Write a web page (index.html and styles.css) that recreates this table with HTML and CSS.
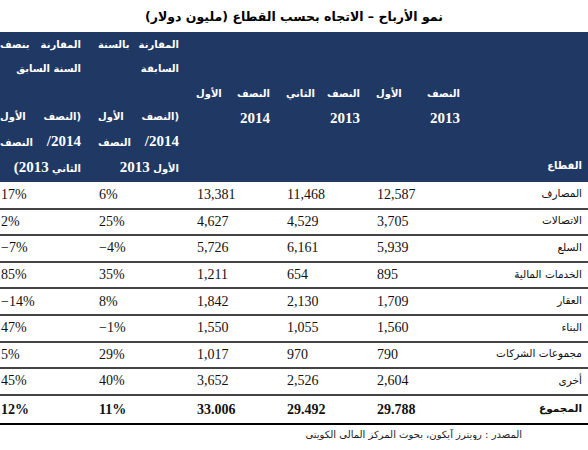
FILE: index.html
```html
<!DOCTYPE html>
<html lang="ar" dir="rtl">
  <head>
    <meta charset="UTF-8" />
    <meta name="viewport" content="width=device-width, initial-scale=1.0" />
    <title>نمو الأرباح</title>
    <link rel="stylesheet" href="styles.css">
  </head>
  <body>
    <div class="report">
      <h1 class="title">نمو الأرباح – الاتجاه بحسب القطاع (مليون دولار)</h1>

      <table class="profits">
        <thead>
          <tr>
            <th class="col-sector">القطاع</th>
            <th class="col-half first">
              <div class="just">النصف الأول</div>
              <div><span class="num">2013</span></div>
            </th>
            <th class="col-half">
              <div class="just">النصف الثاني</div>
              <div><span class="num">2013</span></div>
            </th>
            <th class="col-half">
              <div class="just">النصف الأول</div>
              <div><span class="num">2014</span></div>
            </th>
            <th class="col-cmp">
              <div class="just">المقارنة بالسنة</div>
              <div>السابقة</div>
              <div class="blank"></div>
              <div class="just">(النصف الأول</div>
              <div class="just"><span class="num">2014/</span> النصف</div>
              <div>الأول <span class="num">2013</span></div>
            </th>
            <th class="col-cmp">
              <div class="just">المقارنة بنصف</div>
              <div>السنة السابق</div>
              <div class="blank"></div>
              <div class="just">(النصف الأول</div>
              <div class="just"><span class="num">2014/</span> النصف</div>
              <div>الثاني <span class="num">2013)</span></div>
            </th>
          </tr>
        </thead>
        <tbody>
          <tr><td class="sector">المصارف</td><td>12,587</td><td>11,468</td><td>13,381</td><td>6%</td><td>17%</td></tr>
          <tr><td class="sector">الاتصالات</td><td>3,705</td><td>4,529</td><td>4,627</td><td>25%</td><td>2%</td></tr>
          <tr><td class="sector">السلع</td><td>5,939</td><td>6,161</td><td>5,726</td><td>−4%</td><td>−7%</td></tr>
          <tr><td class="sector">الخدمات المالية</td><td>895</td><td>654</td><td>1,211</td><td>35%</td><td>85%</td></tr>
          <tr><td class="sector">العقار</td><td>1,709</td><td>2,130</td><td>1,842</td><td>8%</td><td>−14%</td></tr>
          <tr><td class="sector">البناء</td><td>1,560</td><td>1,055</td><td>1,550</td><td>−1%</td><td>47%</td></tr>
          <tr><td class="sector">مجموعات الشركات</td><td>790</td><td>970</td><td>1,017</td><td>29%</td><td>5%</td></tr>
          <tr><td class="sector">أخرى</td><td>2,604</td><td>2,526</td><td>3,652</td><td>40%</td><td>45%</td></tr>
          <tr class="total"><td class="sector">المجموع</td><td>29.788</td><td>29.492</td><td>33.006</td><td>11%</td><td>12%</td></tr>
        </tbody>
      </table>

      <p class="source">المصدر : رويترز آيكون، بحوث المركز المالي الكويتي</p>
    </div>
  </body>
</html>
```

FILE: styles.css
```css
* {
  margin: 0;
  padding: 0;
  box-sizing: border-box;
}

body {
  font-family: 'Liberation Serif', 'DejaVu Sans', serif;
  background: #fff;
  color: #111;
}

.report {
  width: 588px;
}

.title {
  font-family: 'DejaVu Sans', sans-serif;
  font-size: 12.5px;
  font-weight: bold;
  text-align: center;
  height: 32px;
  line-height: 34px;
  color: #000;
}

.profits {
  width: 588px;
  border-collapse: collapse;
  table-layout: fixed;
}

.profits th {
  background-color: #1f3864;
  color: #fff;
  font-family: 'DejaVu Sans', sans-serif;
  font-size: 10px;
  font-weight: bold;
  line-height: 24px;
  height: 150px;
  padding: 0 13px 0 3px;
  text-align: right;
  vertical-align: middle;
}

.profits th.col-sector {
  width: 125px;
  vertical-align: bottom;
  padding: 0 6px 4px 0;
}

.profits th.col-half {
  width: 90px;
}

.profits th.col-half.first {
  padding-right: 3px;
}

.profits th.col-cmp {
  width: 98px;
  padding-right: 14px;
}

.just {
  white-space: nowrap;
  text-align: justify;
  text-align-last: justify;
}

.blank {
  height: 24px;
}

.num {
  font-family: 'Liberation Serif', serif;
  font-size: 15px;
}

.profits td {
  direction: ltr;
  font-size: 14px;
  height: 26.6px;
  padding: 0 4px;
  text-align: left;
  border-bottom: 2px solid #444;
}

.profits td.sector {
  direction: rtl;
  font-family: 'DejaVu Sans', sans-serif;
  font-size: 10.5px;
  text-align: right;
  padding: 0 6px 3px 0;
}

.profits tr.total td {
  font-weight: bold;
  height: 29.6px;
  border-top: 2px solid #222;
  border-bottom: 2px solid #000;
}

.source {
  font-family: 'DejaVu Sans', sans-serif;
  font-size: 10px;
  text-align: right;
  padding: 4px 66px 0 0;
  color: #222;
}
```
